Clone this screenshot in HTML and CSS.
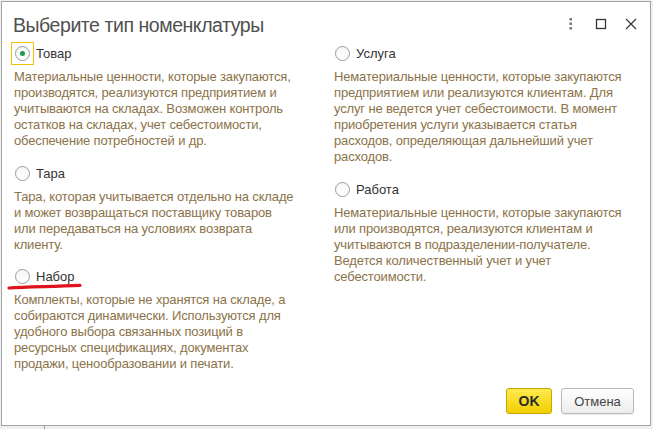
FILE: index.html
```html
<!DOCTYPE html>
<html lang="ru">
<head>
<meta charset="utf-8">
<title>Выберите тип номенклатуры</title>
<link rel="stylesheet" href="styles.css">
</head>
<body>
<div class="window">
  <div class="header">
    <div class="title">Выберите тип номенклатуры</div>
    <div class="tools">
      <svg class="tool" width="12" height="12" viewBox="0 0 12 12"><rect x="4.5" y="0" width="2.5" height="2.5" fill="#777"/><rect x="4.5" y="4.5" width="2.5" height="2.5" fill="#777"/><rect x="4.5" y="9" width="2.5" height="2.5" fill="#777"/></svg>
      <svg class="tool" width="12" height="12" viewBox="0 0 12 12"><rect x="1.5" y="1.5" width="9" height="9" fill="none" stroke="#333" stroke-width="1.3"/></svg>
      <svg class="tool" width="12" height="12" viewBox="0 0 12 12"><path d="M1 1 L11 11 M11 1 L1 11" stroke="#333" stroke-width="1.1" fill="none"/></svg>
    </div>
  </div>
  <div class="body">
    <div class="column">
      <div class="option">
        <div class="row"><span class="focus"><span class="radio checked"></span></span><span class="label">Товар</span></div>
        <p class="desc">Материальные ценности, которые закупаются,<br>производятся, реализуются предприятием и<br>учитываются на складах. Возможен контроль<br>остатков на складах, учет себестоимости,<br>обеспечение потребностей и др.</p>
      </div>
      <div class="option">
        <div class="row"><span class="focus none"><span class="radio"></span></span><span class="label">Тара</span></div>
        <p class="desc">Тара, которая учитывается отдельно на складе<br>и может возвращаться поставщику товаров<br>или передаваться на условиях возврата<br>клиенту.</p>
      </div>
      <div class="option">
        <div class="row"><span class="focus none"><span class="radio"></span></span><span class="label">Набор</span></div>
        <svg class="mark" width="76" height="9" viewBox="0 0 76 9"><path d="M2 6 C 20 5, 45 4.6, 73 3.4" stroke="#e0121b" stroke-width="3.2" fill="none" stroke-linecap="round"/></svg>
        <p class="desc">Комплекты, которые не хранятся на складе, а<br>собираются динамически. Используются для<br>удобного выбора связанных позиций в<br>ресурсных спецификациях, документах<br>продажи, ценообразовании и печати.</p>
      </div>
    </div>
    <div class="column">
      <div class="option">
        <div class="row"><span class="focus none"><span class="radio"></span></span><span class="label">Услуга</span></div>
        <p class="desc">Нематериальные ценности, которые закупаются<br>предприятием или реализуются клиентам. Для<br>услуг не ведется учет себестоимости. В момент<br>приобретения услуги указывается статья<br>расходов, определяющая дальнейший учет<br>расходов.</p>
      </div>
      <div class="option">
        <div class="row"><span class="focus none"><span class="radio"></span></span><span class="label">Работа</span></div>
        <p class="desc">Нематериальные ценности, которые закупаются<br>или производятся, реализуются клиентам и<br>учитываются в подразделении-получателе.<br>Ведется количественный учет и учет<br>себестоимости.</p>
      </div>
    </div>
  </div>
  <div class="footer">
    <button class="btn ok">OK</button>
    <button class="btn cancel">Отмена</button>
  </div>
</div>
<div class="under"></div>
</body>
</html>
```
FILE: styles.css
```css
html, body {
  margin: 0;
  padding: 0;
}
body {
  background: #f0f0f0;
  font-family: "Liberation Sans", Arial, sans-serif;
  width: 653px;
  height: 429px;
  overflow: hidden;
}
.window {
  box-sizing: border-box;
  margin: 1px 0 0 1px;
  width: 650px;
  height: 425px;
  background: #fff;
  border: 1px solid #a3a3a3;
  display: flex;
  flex-direction: column;
  position: relative;
}
.header {
  display: flex;
  align-items: flex-start;
  padding: 11px 13px 0 11px;
  height: 29px;
}
.title {
  font-size: 19.5px;
  letter-spacing: -0.45px;
  line-height: 24px;
  color: #505050;
  flex: 1;
}
.tools {
  display: flex;
  gap: 18px;
  padding-top: 5px;
}
.tool {
  display: block;
}
.body {
  display: grid;
  grid-template-columns: 300px 300px;
  column-gap: 20px;
  padding: 0 0 0 9px;
}
.column {
  display: flex;
  flex-direction: column;
  gap: 12.5px;
}
.option {
  position: relative;
  padding-left: 3px;
}
.row {
  display: flex;
  align-items: center;
  height: 23px;
  margin-left: -3px;
}
.focus {
  box-sizing: border-box;
  width: 23px;
  height: 23px;
  border: 1px solid #f4c300;
  display: flex;
  align-items: center;
  justify-content: center;
}
.focus.none {
  border-color: transparent;
}
.radio {
  box-sizing: border-box;
  width: 15px;
  height: 15px;
  border-radius: 50%;
  border: 1px solid #9a9a9a;
  background: linear-gradient(#f7f7f7, #ffffff);
  display: flex;
  align-items: center;
  justify-content: center;
}
.radio.checked::after {
  content: "";
  width: 5px;
  height: 5px;
  border-radius: 50%;
  background: #1f9a4a;
}
.label {
  margin-left: 2px;
  font-size: 13px;
  color: #333;
}
.desc {
  margin: 4px 0 0 0;
  font-size: 13px;
  line-height: 16px;
  letter-spacing: -0.15px;
  color: #8b7349;
  white-space: nowrap;
}
.mark {
  position: absolute;
  left: -4px;
  top: 17px;
}
.footer {
  margin-top: auto;
  display: flex;
  justify-content: flex-end;
  gap: 9px;
  padding: 0 16px 11px 0;
}
.btn {
  box-sizing: border-box;
  height: 26px;
  border-radius: 3px;
  font-family: "Liberation Sans", Arial, sans-serif;
  padding: 0;
  cursor: pointer;
}
.ok {
  width: 46px;
  background: linear-gradient(#ffe94f, #f1cf00);
  border: 1px solid #c5a600;
  font-weight: bold;
  font-size: 14px;
  color: #2b2b2b;
}
.cancel {
  width: 73px;
  background: linear-gradient(#ffffff, #ececec);
  border: 1px solid #b9b9b9;
  font-size: 13px;
  color: #444;
  box-shadow: 0 1px 1px rgba(0,0,0,0.08);
}
.under {
  margin-left: 44px;
  height: 3px;
  border-left: 1px solid #9c9c9c;
}
```
